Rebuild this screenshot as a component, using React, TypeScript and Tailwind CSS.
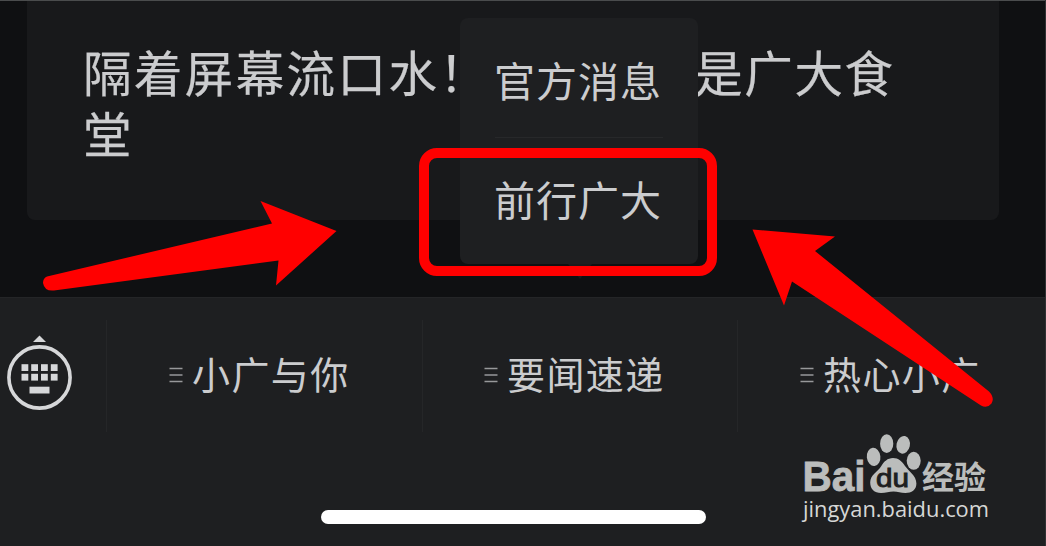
import React from 'react';

const menus = [
  { label: '小广与你', width: 'w-[316px]', pad: 'pl-[62px]' },
  { label: '要闻速递', width: 'w-[315px]', pad: 'pl-[61px]' },
  { label: '热心小广', width: 'w-[308px]', pad: 'pl-[62px]' },
];

const KeyboardIcon: React.FC = () => (
  <svg className="block w-[66px] h-[76px]" viewBox="0 0 66 76" fill="#d6d7d9">
    <path d="M33.5 0.500L40 7H27z" />
    <circle cx="33.5" cy="42.5" r="30.6" fill="none" stroke="#d6d7d9" strokeWidth="3.6" />
    {[29.2, 38.8].map(y =>
      [15.5, 25.2, 35, 44.8].map(x => <rect key={`${x}-${y}`} x={x} y={y} width="6.8" height="6.8" />)
    )}
    <rect x="23.5" y="51.7" width="20" height="6.8" />
  </svg>
);

const MenuLines: React.FC = () => (
  <svg className="block w-[14px] h-[16px] shrink-0" viewBox="0 0 14 16" stroke="#97989a" strokeWidth="1.5">
    <path d="M0.5 1.5H13.5M0.5 8H13.5M0.5 14.5H13.5" />
  </svg>
);

const BaiduLogo: React.FC = () => (
  <svg className="block w-[196px] h-[96px]" viewBox="0 0 196 96" fill="#bbbdbc">
    <text x="2.5" y="61" fontFamily="Liberation Sans, Arial, sans-serif" fontWeight="700" fontSize="42" textLength="63" lengthAdjust="spacingAndGlyphs" stroke="#bbbdbc" strokeWidth="0.8">Bai</text>
    <ellipse cx="73.6" cy="26.9" rx="6.8" ry="9.2" transform="rotate(-6 73.6 26.9)" />
    <ellipse cx="86.7" cy="13.7" rx="6.6" ry="9.4" />
    <ellipse cx="103.2" cy="14.8" rx="6.7" ry="8.9" transform="rotate(12 103.2 14.8)" />
    <ellipse cx="113.7" cy="30.8" rx="7" ry="9" />
    <path d="M93 28C98.500 28 102 31.500 105 36C108.500 41 116.400 45.500 116.400 53.500C116.400 60 111.500 63 105.500 63C100.500 63 98 61.500 93.500 61.500C89 61.500 86 63 81 63C74.500 63 70.200 59 70.200 52.500C70.200 45 77.500 42 81 36.500C84 31.500 87.500 28 93 28Z" />
    <text x="76" y="57" fill="#1e1f21" fontFamily="Liberation Sans, Arial, sans-serif" fontWeight="400" fontSize="25" textLength="33" lengthAdjust="spacingAndGlyphs" stroke="#1e1f21" strokeWidth="0.9">du</text>
    <text x="122" y="59" fontFamily="Noto Sans CJK SC, sans-serif" fontWeight="700" fontSize="32" textLength="64" lengthAdjust="spacingAndGlyphs">经验</text>
    <text x="3" y="86.5" fill="#d6d7d6" fontFamily="Open Sans, Noto Sans, sans-serif" fontSize="21.5" textLength="186" lengthAdjust="spacingAndGlyphs">jingyan.baidu.com</text>
  </svg>
);

const App: React.FC = () => {
  return (
    <div className="relative w-[1046px] h-[546px] overflow-hidden flex flex-col bg-[#0f1012] text-[#cbccce] font-['Noto_Sans_CJK_SC',sans-serif]">
      {/* Article card */}
      <div className="h-[297px] shrink-0 px-[27px] border-t border-[#4a4c4d]">
        <div className="w-[972px] h-[219px] rounded-b-lg bg-[#18191b] pl-[56px] pt-[40px]">
          <p className="text-[48.5px] leading-[61px] tracking-[2.4px] whitespace-nowrap [-webkit-text-stroke:0.25px_#cbccce]">
            隔着屏幕流口水！<span className="inline-block w-[204px]"></span>
            <span className="tracking-[1.6px]">是广大食</span>
            <br />
            堂
          </p>
        </div>
      </div>

      {/* Bottom menu bar */}
      <div className="flex-1 flex flex-col items-center bg-[#1e1f21] border-t border-[#242527]">
        <div className="flex w-full h-[212px] pt-[22px]">
          <div className="w-[107px] h-[112px] pl-[6px] pt-[15px] border-r border-[#252628]">
            <KeyboardIcon />
          </div>
          {menus.map((menu, i) => (
            <div
              key={menu.label}
              className={`${menu.width} ${menu.pad} h-[112px] flex items-center gap-[9px] pb-[3px] ${i < 2 ? 'border-r border-[#252628]' : ''}`}
            >
              <MenuLines />
              <span className="text-[38px] leading-[56px] tracking-[1.4px] whitespace-nowrap pb-[4px]">{menu.label}</span>
            </div>
          ))}
        </div>
        <div className="w-[385px] h-[14px] rounded-full bg-white mr-[20px]"></div>
      </div>

      {/* Submenu popup */}
      <div className="absolute left-[460px] top-[18px] w-[238px] h-[246px] rounded-lg bg-[#1e1f21] flex flex-col items-center text-[41px] leading-[60px] tracking-[1px] whitespace-nowrap">
        <div className="h-[119px] pt-[31px] pr-[2px]">官方消息</div>
        <div className="w-[168px] h-px bg-[#27282a]"></div>
        <div className="pt-[30px] pr-[2px]">前行广大</div>
        <div className="absolute left-[108px] -bottom-[15px] border-x-[12px] border-t-[15px] border-x-transparent border-t-[#1a1b1d]"></div>
      </div>

      <div className="absolute right-0 bottom-0 w-px h-full bg-[#303133]"></div>

      <div className="absolute left-[800px] top-[430px]">
        <BaiduLogo />
      </div>

      {/* Red highlight and arrows */}
      <div className="absolute left-[419px] top-[148px] w-[298px] h-[128px] rounded-[18px] border-[10px] border-[#ff0000]"></div>
      <svg className="absolute left-0 top-0 w-[1046px] h-[546px] pointer-events-none" viewBox="0 0 1046 546" fill="#ff0000">
        <path d="M47 276.500L272 223.500L260.500 201L336.500 231L276 285.500L278.500 260.500L54 290.500Q44.500 291.500 43 283Q43 278 47 276.500Z" />
        <path d="M752.500 229.500L835 236.500L815 251L989 391.500Q995 398 991.500 403.500Q987 409 981 405.500L792 281.500L784 305.500Z" />
      </svg>
    </div>
  );
};

export default App;
